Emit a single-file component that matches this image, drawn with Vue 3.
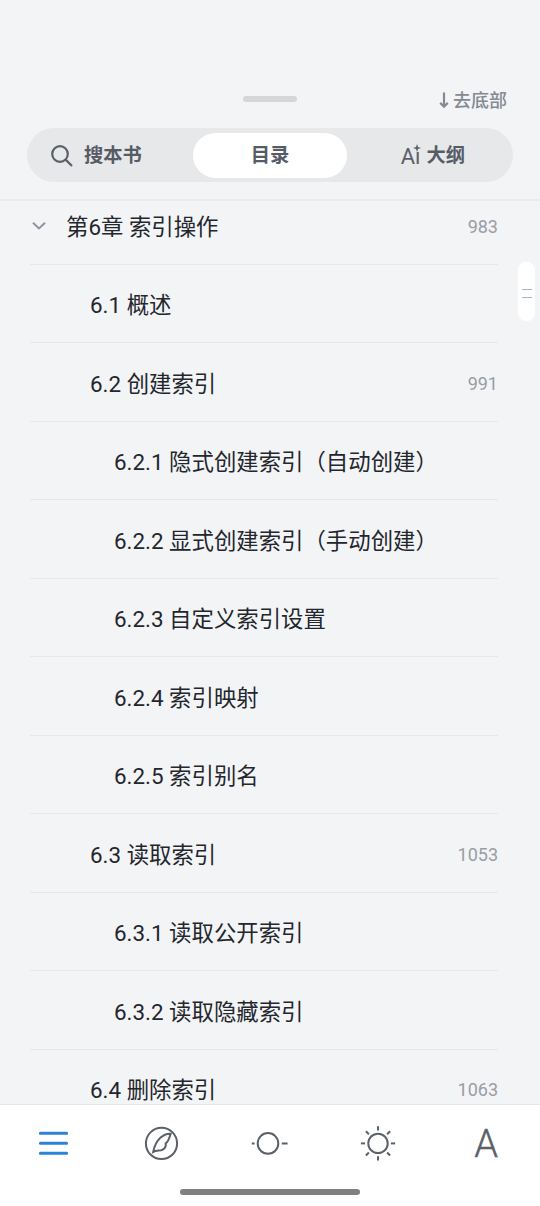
<template>
  <div class="page">
    <header class="panel_head">
      <div class="handle_row">
        <div class="handle"></div>
        <div class="to_bottom">
          <svg class="arrow" viewBox="0 0 12 18">
            <path d="M6 0.5V14.5M2.2 10.9L6 14.7L9.8 10.9" />
          </svg>
          <span>去底部</span>
        </div>
      </div>
      <div class="tabs">
        <div class="tab search_tab">
          <svg class="search_icon" viewBox="0 0 24 24">
            <circle cx="10" cy="10" r="7.8" />
            <path d="M15.6 15.6L22 22" />
          </svg>
          <span>搜本书</span>
        </div>
        <div class="tab active">目录</div>
        <div class="tab outline_tab">
          <div class="ai_icon">
            <span>Aı</span>
            <svg class="sparkle" viewBox="0 0 8 8">
              <path d="M4 0L5 3L8 4L5 5L4 8L3 5L0 4L3 3Z" />
            </svg>
          </div>
          <span>大纲</span>
        </div>
      </div>
    </header>

    <main class="toc">
      <div class="toc_list">
        <div v-for="item in chapters" :key="item.title" class="row" :class="'level_' + item.level">
          <svg v-if="item.level === 1" class="chevron" viewBox="0 0 14 10">
            <path d="M1 1.8L7 7.4L13 1.8" />
          </svg>
          <div class="title">{{ item.title }}</div>
          <div v-if="item.page" class="page_num">{{ item.page }}</div>
        </div>
      </div>
      <div class="scroll_thumb">
        <i></i>
        <i></i>
      </div>
    </main>

    <footer class="toolbar">
      <nav class="tools">
        <svg class="tool menu_tool" viewBox="0 0 40 40">
          <path d="M6.4 10.2H32.6M6.4 20.3H32.6M6.4 30.3H32.6" />
        </svg>
        <svg class="tool" viewBox="0 0 40 40">
          <circle cx="19.5" cy="20.4" r="15.6" />
          <path d="M28.6 10.8C22 10.4 13.7 15.9 11.2 29C14.5 27 17.8 28 20.2 26.8C23 25.4 24.2 23.2 23.7 20.3C26.6 18.4 27.6 14.2 28.6 10.8Z" />
        </svg>
        <svg class="tool" viewBox="0 0 40 40">
          <circle cx="18" cy="20.4" r="10.3" />
          <path d="M1.8 20.4H4.6M31.8 20.4H37.6" />
        </svg>
        <svg class="tool" viewBox="0 0 40 40">
          <circle cx="20" cy="20.4" r="9.7" />
          <path v-for="angle in rays" :key="angle" d="M20 3.3V7.5" :transform="`rotate(${angle} 20 20.4)`" />
        </svg>
        <div class="tool font_tool">A</div>
      </nav>
      <div class="home_bar"></div>
    </footer>
  </div>
</template>

<script setup>
const chapters = [
  { title: '第6章 索引操作', level: 1, page: 983 },
  { title: '6.1 概述', level: 2 },
  { title: '6.2 创建索引', level: 2, page: 991 },
  { title: '6.2.1 隐式创建索引（自动创建）', level: 3 },
  { title: '6.2.2 显式创建索引（手动创建）', level: 3 },
  { title: '6.2.3 自定义索引设置', level: 3 },
  { title: '6.2.4 索引映射', level: 3 },
  { title: '6.2.5 索引别名', level: 3 },
  { title: '6.3 读取索引', level: 2, page: 1053 },
  { title: '6.3.1 读取公开索引', level: 3 },
  { title: '6.3.2 读取隐藏索引', level: 3 },
  { title: '6.4 删除索引', level: 2, page: 1063 }
];

const rays = [0, 45, 90, 135, 180, 225, 270, 315];
</script>

<style>
body {
  margin: 0;
}
</style>

<style scoped>
.page {
  display: flex;
  flex-direction: column;
  height: 1206px;
  box-sizing: border-box;
  overflow: hidden;
  background: #f3f4f6;
  color: #23262d;
  font-family: Roboto, "Noto Sans CJK SC", sans-serif;
}

svg {
  display: block;
  flex: none;
  fill: none;
  stroke: #5b6069;
}

.panel_head {
  flex: none;
  height: 201px;
  box-sizing: border-box;
  padding: 84px 27px 0;
  border-bottom: 2px solid #ebecee;
}

.handle_row {
  display: grid;
  grid-template-columns: 1fr 54px 1fr;
  align-items: center;
  height: 30px;
}

.handle {
  grid-column: 2;
  height: 6px;
  margin-bottom: 1px;
  border-radius: 3px;
  background: #d5d6d8;
}

.to_bottom {
  display: flex;
  align-items: center;
  justify-content: flex-end;
  gap: 3px;
  padding: 3px 6px 0 0;
  color: #858992;
  font-size: 18px;
  font-weight: 500;
  line-height: 24px;
}

.arrow {
  width: 12px;
  height: 18px;
  stroke: #858992;
  stroke-width: 2.2;
}

.tabs {
  display: grid;
  grid-template-columns: repeat(3, 1fr);
  gap: 9px;
  height: 54px;
  box-sizing: border-box;
  margin-top: 14px;
  padding: 5px 4px 4px;
  border-radius: 27px;
  background: #e7e8ea;
}

.tab {
  display: flex;
  align-items: center;
  justify-content: center;
  border-radius: 23px;
  color: #565c66;
  font-size: 19.3px;
  font-weight: 700;
  line-height: 28px;
}

.tab.active {
  background: #fff;
}

.search_tab {
  justify-content: flex-start;
  gap: 10px;
  padding-left: 19px;
}

.search_icon {
  width: 24px;
  height: 24px;
  stroke-width: 2.2;
}

.outline_tab {
  gap: 6px;
  padding-left: 1px;
}

.ai_icon {
  position: relative;
  padding-top: 3px;
  color: #5b6069;
  font-size: 22px;
  font-weight: 400;
  line-height: 28px;
}

.sparkle {
  position: absolute;
  top: 4px;
  right: -1px;
  width: 8px;
  height: 8px;
  fill: #5b6069;
  stroke: none;
}

.toc {
  position: relative;
  display: flex;
  flex: 1;
  flex-direction: column;
  justify-content: flex-end;
  min-height: 0;
  overflow: hidden;
}

/* the list is scrolled a little, so both end rows are cut */
.toc_list {
  flex: none;
  margin: 0 42px -24px 30px;
}

.row {
  display: flex;
  align-items: center;
  height: 78.5px;
  box-sizing: border-box;
  border-bottom: 1px solid #e7e8ea;
}

.level_2 {
  padding-left: 60px;
}

.level_3 {
  padding-left: 84px;
}

.chevron {
  width: 14px;
  height: 10px;
  margin: 2px 20px 0 2px;
  stroke: #8f939b;
  stroke-width: 2;
}

.title {
  flex: 1;
  font-size: 22.4px;
  white-space: nowrap;
}

.page_num {
  padding-top: 3px;
  color: #9a9da5;
  font-size: 18px;
}

.scroll_thumb {
  position: absolute;
  top: 61px;
  right: 5px;
  display: flex;
  flex-direction: column;
  align-items: center;
  justify-content: center;
  gap: 7px;
  width: 17px;
  height: 59px;
  padding-top: 3px;
  box-sizing: border-box;
  border-radius: 8px;
  background: #fff;
}

.scroll_thumb i {
  width: 10px;
  height: 1px;
  background: #aeb1b6;
}

.toolbar {
  flex: none;
  height: 102px;
  box-sizing: border-box;
  border-top: 1px solid #e5e6e8;
  background: #fff;
}

.tools {
  display: grid;
  grid-template-columns: repeat(5, 1fr);
  justify-items: center;
  align-items: center;
  height: 76px;
}

.tool {
  width: 40px;
  height: 40px;
  stroke-width: 2;
}

.menu_tool {
  stroke: #2b83d6;
  stroke-width: 3;
  stroke-linecap: round;
}

.font_tool {
  color: #5b6069;
  font-size: 38px;
  font-weight: 300;
  line-height: 43px;
  text-align: center;
  -webkit-text-stroke: 0.4px #5b6069;
}

.home_bar {
  width: 180px;
  height: 6px;
  margin: 8px auto 0;
  border-radius: 3px;
  background: #808080;
}
</style>
